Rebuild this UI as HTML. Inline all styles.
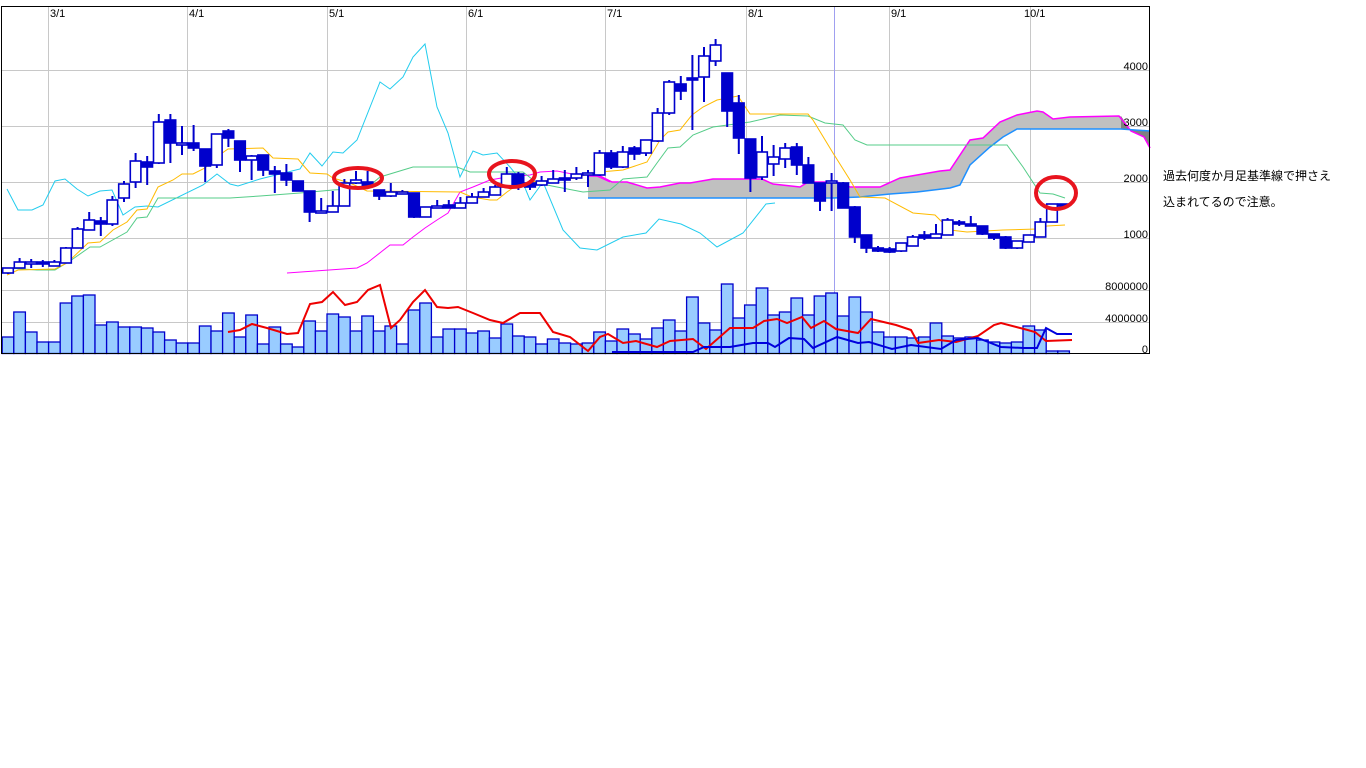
<!DOCTYPE html>
<html><head><meta charset="utf-8"><style>
html,body{margin:0;padding:0;background:#fff;width:1366px;height:768px;overflow:hidden}
svg{position:absolute;left:0;top:0}
.note{position:absolute;left:1163px;font:12px "Liberation Sans","Noto Sans CJK JP",sans-serif;color:#000}
</style></head><body>
<svg id="c" width="1366" height="768" xmlns="http://www.w3.org/2000/svg" font-family="Liberation Sans, sans-serif" font-size="11">
<g stroke="#c8c8c8" stroke-width="1">
<line x1="1" y1="70.5" x2="1150" y2="70.5"/><line x1="1" y1="126.5" x2="1150" y2="126.5"/>
<line x1="1" y1="182.5" x2="1150" y2="182.5"/><line x1="1" y1="238.5" x2="1150" y2="238.5"/>
<line x1="1" y1="290.5" x2="1150" y2="290.5"/><line x1="1" y1="322.5" x2="1150" y2="322.5"/>
<line x1="48.5" y1="6" x2="48.5" y2="354"/><line x1="187.5" y1="6" x2="187.5" y2="354"/>
<line x1="327.5" y1="6" x2="327.5" y2="354"/><line x1="466.5" y1="6" x2="466.5" y2="354"/>
<line x1="605.5" y1="6" x2="605.5" y2="354"/><line x1="746.5" y1="6" x2="746.5" y2="354"/>
<line x1="889.5" y1="6" x2="889.5" y2="354"/><line x1="1030.5" y1="6" x2="1030.5" y2="354"/>
</g>
<line x1="834.5" y1="6" x2="834.5" y2="354" stroke="#a0a0f0"/>
<g id="g"></g>
<rect x="1.5" y="6.5" width="1148" height="347" fill="none" stroke="#000"/>
<g fill="#000">
<text x="50" y="17">3/1</text><text x="189" y="17">4/1</text><text x="329" y="17">5/1</text>
<text x="468" y="17">6/1</text><text x="607" y="17">7/1</text><text x="748" y="17">8/1</text>
<text x="891" y="17">9/1</text><text x="1024" y="17">10/1</text>
</g>
<g fill="#000" text-anchor="end" font-size="11">
<text x="1148" y="70">4000</text><text x="1148" y="126">3000</text><text x="1148" y="182">2000</text>
<text x="1148" y="238">1000</text><text x="1148" y="290">8000000</text><text x="1148" y="322">4000000</text>
<text x="1148" y="353">0</text>
</g>
</svg>
<div class="note" style="top:167px">過去何度か月足基準線で押さえ</div>
<div class="note" style="top:193px">込まれてるので注意。</div>
<script>
(function(){
var G=document.getElementById('g'),h='';
function X(i){return 1.7+11.6*i;}
function pl(pts,col,w){h+='<polyline fill="none" stroke="'+col+'" stroke-width="'+(w||1)+'" points="'+pts+'"/>';}
var tp=[[588,176],[600,176],[612,182],[627,182],[647,188],[660,187],[680,183],[690,183],[713,179],[762,179],[773,184],[800,187],[808,182],[837,182],[850,187],[880,187],[900,178],[940,171],[950,170],[970,140],[983,138],[1000,122],[1017,115],[1037,111],[1043,112],[1053,119],[1070,117],[1119,116],[1131,131],[1144,137],[1150,148]];
var bt=[[588,198],[833,198],[860,197],[890,194],[917,192],[950,188],[960,185],[970,165],[990,147],[1003,137],[1017,129],[1121,129],[1150,131]];
var s=function(a){return a.map(function(p){return p.join(',')}).join(' ');};
h+='<polygon fill="#c0c0c0" points="'+s(tp.slice(0,27))+' 1121,116 '+s(bt.slice(0,12).reverse())+'"/>';
h+='<polygon fill="#808080" points="1121,116 1121,129 1150,131 1150,148 1144,137 1131,131"/>';
var V=[337,312,332,342,342,303,296,295,325,322,327,327,328,332,340,343,343,326,331,313,337,315,344,327,344,347,321,331,314,317,331,316,331,326,344,310,303,337,329,329,333,331,338,324,336,337,344,339,343,344,343,332,341,329,334,339,328,320,331,297,323,330,284,318,305,288,315,312,298,315,296,293,316,297,312,332,337,337,338,337,323,336,338,337,340,342,343,342,326,330,351,351];
for(var i=0;i<V.length;i++){h+='<rect x="'+(X(i)+.5)+'" y="'+V[i]+'" width="11.6" height="'+(353.5-V[i])+'" fill="#99ccff" stroke="#0000cc" stroke-width="1.3"/>';}
pl("228,332 240,330 252,324 267,328 287,334 298,333 310,304 322,302 333,292 345,305 357,302 368,290 380,285 391,328 400,320 413,302 425,290 437,307 448,308 458,307 473,313 490,320 503,323 520,313 540,313 553,332 570,337 588,351 600,337 608,334 623,343 636,341 657,347 670,341 693,339 706,349 730,328 753,328 764,321 777,319 787,323 802,317 811,328 824,321 836,329 858,333 871,319 896,325 911,330 918,343 939,340 956,342 978,336 994,325 1001,323 1024,329 1035,332 1046,341 1072,340","#ee0000",2);
pl("612,352 693,352 704,347 730,347 753,343 768,343 775,347 789,338 804,339 813,348 837,337 858,343 869,342 892,349 911,345 941,349 956,340 978,338 1001,347 1024,348 1037,348 1046,328 1057,334 1072,334","#0000dd",2);
pl("7,189 18,210 32,210 43,205 55,181 65,179 77,189 88,196 100,191 112,190 123,215 135,207 147,206 158,207 203,185 217,174 230,184 238,186 260,179 300,169 310,153 322,166 333,152 343,153 357,140 380,82 390,89 403,77 413,57 425,44 437,107 448,133 460,177 473,151 483,155 497,153 510,167 523,183 530,200 543,182 563,230 580,248 597,250 623,237 646,233 659,219 681,224 700,233 717,247 743,233 766,204 775,203","#22ccee");
pl("287,273 357,268 367,263 390,245 403,245 413,237 425,228 437,220 448,213 460,192 473,187 490,180 507,177 530,175 540,172 557,171 577,175 590,173 610,182","#ff00ff");
pl(s(tp),"#ff00ff",1.5);pl(s(bt),"#1e90ff",1.5);
pl("7,268 37,270 55,270 70,261 90,247 100,247 127,232 137,218 147,217 158,198 230,198 260,196 300,193 333,190 367,188 380,177 413,167 457,167 470,172 523,172 537,183 557,187 583,192 610,190 623,179 647,177 657,163 668,148 680,147 693,135 713,127 750,122 780,115 808,116 825,123 843,125 855,140 867,145 1007,145 1023,167 1040,193 1053,194 1065,198","#55cc88");
pl("7,275 18,270 55,269 67,263 88,243 100,242 113,230 127,222 137,210 147,209 158,187 173,180 182,174 193,174 205,168 218,156 228,149 263,148 273,158 298,159 303,165 310,173 327,174 333,178 350,183 367,191 460,192 472,197 490,200 497,200 507,192 517,185 530,182 577,178 590,173 600,172 623,170 647,162 660,140 668,132 680,130 692,115 703,107 717,100 738,96 750,114 808,114 813,120 833,153 850,180 860,197 885,198 913,213 935,215 950,230 967,232 1003,230 1037,229 1047,226 1065,225","#ffbb00");
var C=[[268,273,268,274,0],[262,268,258,268,0],[262,263,259,268,0],[262,264,260,267,1],[262,266,260,266,0],[248,263,247,263,0],[229,248,227,248,0],[220,230,212,230,0],[221,224,217,236,1],[200,224,196,226,0],[184,198,181,202,0],[161,182,153,188,0],[162,167,156,185,1],[122,163,114,164,0],[120,143,114,163,1],[143,143,126,155,0],[143,148,125,151,1],[149,166,149,182,1],[134,165,134,168,0],[131,138,129,147,1],[141,160,141,172,1],[156,160,155,180,0],[155,170,155,176,1],[171,174,166,193,1],[173,180,164,186,1],[181,191,181,191,1],[191,212,191,222,1],[211,212,198,213,0],[206,212,191,212,0],[183,206,179,206,0],[180,183,171,184,0],[182,186,171,186,1],[190,196,190,200,1],[192,196,183,197,0],[192,193,190,194,0],[193,217,193,218,1],[207,217,207,217,0],[206,208,200,208,0],[205,208,200,208,1],[203,208,197,208,0],[197,203,193,203,0],[192,197,188,197,0],[187,195,185,195,0],[174,187,167,187,0],[174,185,172,190,1],[183,187,180,190,1],[181,185,176,186,0],[179,183,170,183,0],[178,180,170,192,1],[174,178,167,180,0],[173,175,170,187,0],[153,175,150,176,0],[153,167,150,169,1],[152,167,146,168,0],[148,154,146,160,1],[140,153,140,156,0],[113,141,108,142,0],[82,113,80,115,0],[84,91,76,100,1],[78,80,55,130,1],[56,77,47,102,0],[45,61,39,66,0],[73,111,73,127,1],[103,138,95,154,1],[139,178,139,192,1],[152,177,136,180,0],[157,164,145,176,0],[148,159,143,168,0],[147,165,143,175,1],[165,183,157,183,1],[183,201,183,211,1],[181,183,173,211,0],[183,208,182,208,1],[207,237,206,243,1],[235,248,235,253,1],[248,251,246,252,1],[249,252,247,253,1],[243,251,243,252,0],[237,246,235,246,0],[235,238,231,240,1],[234,238,224,238,0],[220,235,218,235,0],[222,224,220,226,1],[224,226,216,226,1],[226,234,226,235,1],[234,238,234,240,1],[237,248,236,249,1],[241,248,241,249,0],[235,242,235,242,0],[222,237,218,237,0],[204,222,204,222,0],[204,206,204,206,1]];
for(var j=0;j<C.length;j++){var c=C[j],l=X(j)+1,cx=(l+5.3).toFixed(1);
h+='<line x1="'+cx+'" x2="'+cx+'" y1="'+c[2]+'" y2="'+c[3]+'" stroke="#0000cc" stroke-width="2"/>';
var hh=Math.max(c[1]-c[0],2);
h+='<rect x="'+l.toFixed(1)+'" y="'+c[0]+'" width="10.6" height="'+hh+'" fill="'+(c[4]?'#0000cc':'#fff')+'" stroke="#0000cc" stroke-width="1.6"/>';}
h+='<ellipse cx="358" cy="178" rx="24" ry="10" fill="none" stroke="#e8141e" stroke-width="4"/>';
h+='<ellipse cx="512" cy="174" rx="23" ry="13" fill="none" stroke="#e8141e" stroke-width="4"/>';
h+='<ellipse cx="1056" cy="193" rx="20" ry="16" fill="none" stroke="#e8141e" stroke-width="4"/>';
G.innerHTML=h;
})();
</script>
</body></html>
